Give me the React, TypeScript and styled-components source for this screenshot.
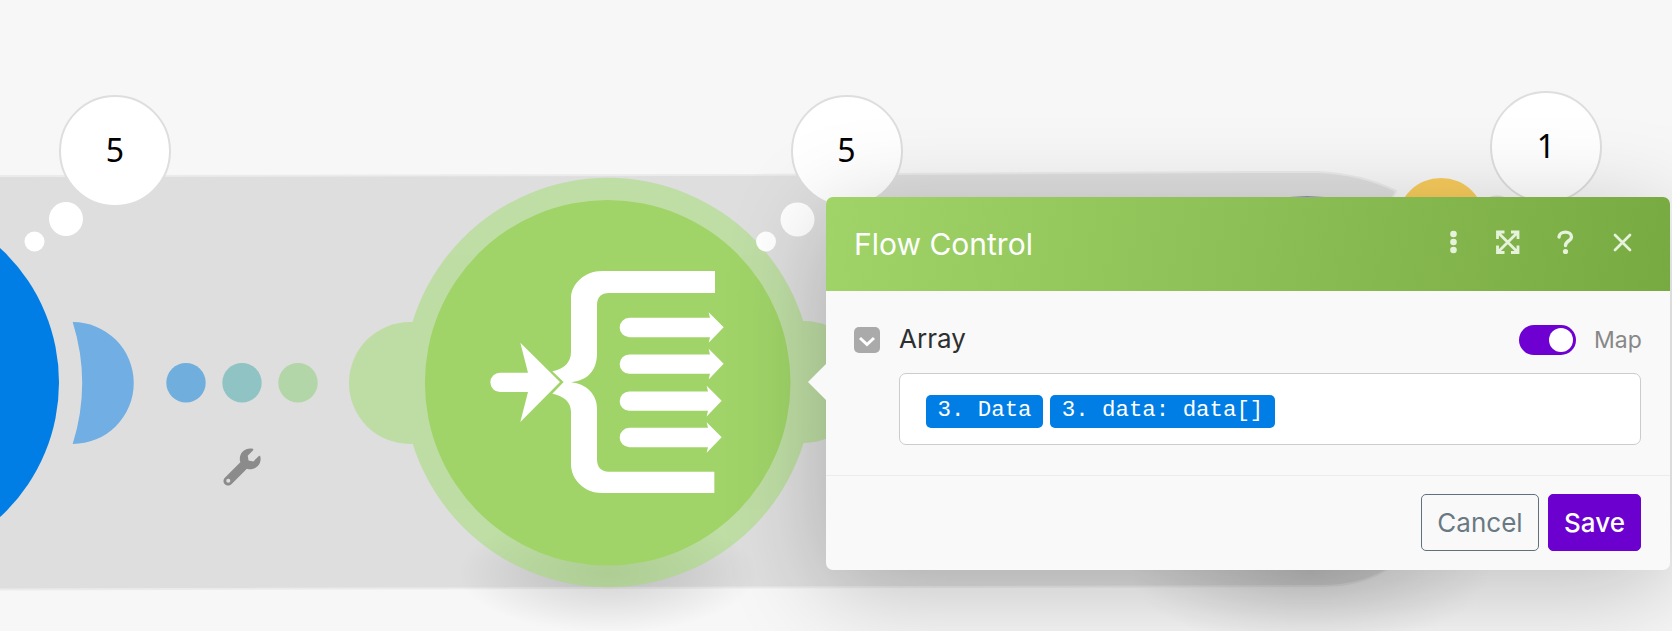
import React from "react";
import styled, { createGlobalStyle } from "styled-components";

const GlobalStyle = createGlobalStyle`
  * { box-sizing: border-box; }
  body { margin: 0; background: #f7f7f7; font-family: Inter, "Liberation Sans", sans-serif; overflow: hidden; }
`;

const Canvas = styled.main`
  position: relative;
  width: 1672px;
  height: 631px;
  overflow: hidden;
  background: #f7f7f7;
`;

const Flow = styled.svg`
  display: block;
`;

const Bubble = styled.div<{ $x: number; $y: number }>`
  position: absolute;
  left: ${(p) => p.$x}px;
  top: ${(p) => p.$y}px;
  width: 112px;
  height: 112px;
  display: flex;
  align-items: center;
  justify-content: center;
  border: 2.5px solid #dedede;
  border-radius: 50%;
  background: #fff;
  font: 400 32px/1 "Noto Sans", "Open Sans", sans-serif;
  color: #000;
  padding-bottom: 3px;
`;

const Panel = styled.section`
  position: absolute;
  left: 826px;
  top: 197px;
  width: 844px;
  height: 373px;
  display: flex;
  flex-direction: column;
  border-radius: 7px;
  background: #f9f9f9;
  box-shadow: 0 20px 100px rgba(0, 0, 0, 0.23);
  &::before {
    content: "";
    position: absolute;
    left: -18px;
    top: 167px;
    border: 18px solid transparent;
    border-left: 0;
    border-right-color: #f9f9f9;
  }
`;

const Header = styled.header`
  height: 94px;
  flex: none;
  display: flex;
  align-items: center;
  justify-content: space-between;
  padding: 0 30px 4px 28px;
  border-radius: 7px 7px 0 0;
  background: linear-gradient(100deg, #a0d468, #78aa42);
`;

const Title = styled.h1`
  margin: 0;
  padding-top: 4px;
  font-size: 30px;
  line-height: 36px;
  font-weight: 400;
  color: #fff;
`;

const Actions = styled.nav`
  display: flex;
  align-items: center;
  gap: 31px;
`;

const Action = styled.button`
  display: flex;
  width: 28px;
  height: 28px;
  padding: 0;
  border: 0;
  background: none;
  color: #e7f2dc;
`;

const Body = styled.div`
  height: 184px;
  padding: 34px 29px 0 28px;
`;

const FieldHead = styled.div`
  display: flex;
  align-items: center;
  height: 30px;
`;

const Collapse = styled.button`
  display: flex;
  width: 26px;
  height: 26px;
  margin: 0 19px 0 0;
  padding: 0;
  border: 0;
  border-radius: 5px;
  background: #aaa;
`;

const Label = styled.label`
  flex: 1;
  font-size: 26px;
  line-height: 30px;
  color: #2d2f31;
  padding-bottom: 3px;
`;

const Toggle = styled.div`
  display: flex;
  justify-content: flex-end;
  width: 57px;
  height: 30px;
  padding: 3px;
  border-radius: 15px;
  background: #6e00d2;
`;

const Knob = styled.div`
  width: 24px;
  height: 24px;
  border-radius: 50%;
  background: #fff;
`;

const ToggleText = styled.span`
  margin-left: 18px;
  width: 47px;
  font-size: 23px;
  line-height: 30px;
  color: #888;
`;

const Input = styled.div`
  display: flex;
  align-items: center;
  gap: 7px;
  height: 72px;
  margin: 18px 0 0 45px;
  padding: 4px 0 0 26px;
  border: 1px solid #ccc;
  border-radius: 7px;
  background: #fff;
`;

const Pill = styled.span<{ $width: number }>`
  width: ${(p) => p.$width}px;
  height: 33px;
  text-align: center;
  border-radius: 5px;
  background: #007ee5;
  color: #fff;
  white-space: pre;
  font: 400 22.4px/31px "Courier New", "Liberation Mono", monospace;
`;

const Footer = styled.footer`
  flex: 1;
  display: flex;
  align-items: flex-start;
  justify-content: flex-end;
  gap: 9px;
  padding: 18px 29px 0;
  border-top: 1px solid #ececec;
`;

const Button = styled.button<{ $primary?: boolean }>`
  width: ${(p) => (p.$primary ? 93 : 118)}px;
  height: 57px;
  padding: 0;
  border: 1px solid ${(p) => (p.$primary ? "#6b00cf" : "#60717c")};
  border-radius: 5px;
  background: ${(p) => (p.$primary ? "#6b00cf" : "transparent")};
  color: ${(p) => (p.$primary ? "#fff" : "#697983")};
  font: ${(p) => (p.$primary ? 500 : 400)} 26px/1 Inter, sans-serif;
`;

const arrows = [
  { y: 502.5, tip: 971 },
  { y: 612.5, tip: 971 },
  { y: 723.5, tip: 965 },
  { y: 832.5, tip: 965 },
];

const Scenario = () => (
  <Flow width="1672" height="631">
    <defs>
      <radialGradient id="shade">
        <stop offset="0" stopColor="#000" stopOpacity="0.15" />
        <stop offset="0.5" stopColor="#000" stopOpacity="0.08" />
        <stop offset="1" stopColor="#000" stopOpacity="0" />
      </radialGradient>
    </defs>
    <path
      d="M-4 176 L700 175 L1250 172 H1318 Q1362 174 1396 191 L1392 199 V566 Q1364 586 1322 586 L-4 589.5Z"
      fill="#dedede"
      stroke="#ebebeb"
      strokeWidth="2"
    />
    <ellipse cx="608" cy="573" rx="150" ry="60" fill="url(#shade)" />
    <ellipse cx="1310" cy="573" rx="180" ry="75" fill="url(#shade)" />
    <circle cx="1307" cy="379" r="183" fill="#9b7be8" />
    <circle cx="1441" cy="222" r="44" fill="#f8cb5c" />
    <circle cx="-124" cy="382.5" r="183" fill="#007ee5" />
    <path d="M72 322 A61 61 0 1 1 72 444 A205 205 0 0 0 72 322Z" fill="#70aee3" transform="translate(0.7 0)" />
    <g fill="#a0dd6b" opacity="0.5">
      <circle cx="410" cy="383" r="61" />
      <circle cx="804" cy="382" r="61" />
      <circle cx="608" cy="382.5" r="204.7" />
    </g>
    <circle cx="186" cy="382.7" r="19.7" fill="#70aedd" />
    <circle cx="242" cy="382.7" r="19.7" fill="#90c4c4" />
    <circle cx="298" cy="382.7" r="19.7" fill="#b2d6a7" />
    <circle cx="607.7" cy="382.8" r="182.8" fill="#a0d468" />
    <g transform="translate(400 160) scale(0.33333)" fill="#fff">
      <path d="M945 333H606C553 333 513 373 513 415V575C513 608 492 626 457 634L491 666L457 701C492 708 513 727 513 755V912C513 959 553 999 606 999H943V935H625C604 935 591 922 591 897V745C591 704 560 672 513 667C560 662 591 635 591 580V435C591 412 604 399 627 399H945Z" />
      <path d="M300 638H384L361 548L480 666L361 786L384 696H300A29 29 0 0 1 300 638Z" />
      {arrows.map(({ y, tip }) => (
        <path
          key={y}
          d={`M688 ${y - 29}H${tip - 41}L${tip - 45} ${y - 46}L${tip} ${y - 1}L${tip - 45} ${y + 46}L${tip - 41} ${y + 29}H688A29 29 0 0 1 688 ${y - 29}Z`}
        />
      ))}
    </g>
    <g transform="translate(223.5 448.5) scale(0.0725)" fill="#8b8b8b">
      <path d="M507.7 109.1c-2.2-9-13.5-12.1-20.1-5.5l-74.4 74.4-67.9-11.3L334 98.9l74.4-74.4c6.6-6.6 3.4-17.9-5.7-20.2-47.4-11.7-99.6.9-136.6 37.9-39.6 39.6-50.5 97.1-34.1 147.2L18.7 402.800c-25 25-25 65.5 0 90.5 25 25 65.5 25 90.5 0l213.2-213.2c50.1 16.7 107.5 5.7 147.4-34.2 37.1-37.1 49.700-89.300 37.900-136.800z" />
      <circle cx="66" cy="446" r="28" fill="#dedede" />
    </g>
    <g fill="#fff">
      <circle cx="66" cy="219" r="17" />
      <circle cx="34.500" cy="241.500" r="10" />
      <circle cx="797.500" cy="219.500" r="17" />
      <circle cx="766" cy="241.500" r="10" />
      <circle cx="1497" cy="213.500" r="17" stroke="#dedede" strokeWidth="2" />
    </g>
  </Flow>
);

export default function App() {
  return (
    <>
      <GlobalStyle />
      <Canvas>
        <Scenario />
        <Bubble $x={59} $y={95}>5</Bubble>
        <Bubble $x={790.5} $y={95}>5</Bubble>
        <Bubble $x={1490} $y={91}>1</Bubble>
        <Panel>
          <Header>
            <Title>Flow Control</Title>
            <Actions>
              <Action aria-label="More">
                <svg width="28" height="28" viewBox="0 0 28 28" fill="currentColor">
                  <circle cx="18.500" cy="6" r="3.300" />
                  <circle cx="18.500" cy="14" r="3.300" />
                  <circle cx="18.500" cy="22" r="3.300" />
                </svg>
              </Action>
              <Action aria-label="Expand">
                <svg width="28" height="28" viewBox="0 0 28 28" fill="none" stroke="currentColor" strokeWidth="2.800">
                  <path d="M3.500 11V4H10.500M17 4H24V11M24 17.500V24.500H17M10.500 24.500H3.500V17.500M4 4.500L23.500 24M23.500 4.500L4 24" />
                </svg>
              </Action>
              <Action aria-label="Help">
                <svg width="28" height="28" viewBox="0 0 28 28" fill="none" stroke="currentColor" strokeWidth="3.400" strokeLinecap="round">
                  <path d="M6 9C6.500 2.500 18.500 2.500 18.500 9C18.500 13 12.500 12.500 12.500 17.500" />
                  <circle cx="12.500" cy="23.500" r="2.600" fill="currentColor" stroke="none" />
                </svg>
              </Action>
              <Action aria-label="Close">
                <svg width="28" height="28" viewBox="0 0 28 28" fill="none" stroke="currentColor" strokeWidth="2.700" strokeLinecap="round">
                  <path d="M3 7L18 22M18 7L3 22" />
                </svg>
              </Action>
            </Actions>
          </Header>
          <Body>
            <FieldHead>
              <Collapse aria-label="Collapse">
                <svg width="26" height="26" viewBox="0 0 26 26" fill="none" stroke="#fff" strokeWidth="3">
                  <path d="M6 11L13 17.500L20 11" />
                </svg>
              </Collapse>
              <Label>Array</Label>
              <Toggle>
                <Knob />
              </Toggle>
              <ToggleText>Map</ToggleText>
            </FieldHead>
            <Input>
              <Pill $width={117}>3. Data</Pill>
              <Pill $width={225}>3. data: data[]</Pill>
            </Input>
          </Body>
          <Footer>
            <Button>Cancel</Button>
            <Button $primary>Save</Button>
          </Footer>
        </Panel>
      </Canvas>
    </>
  );
}
